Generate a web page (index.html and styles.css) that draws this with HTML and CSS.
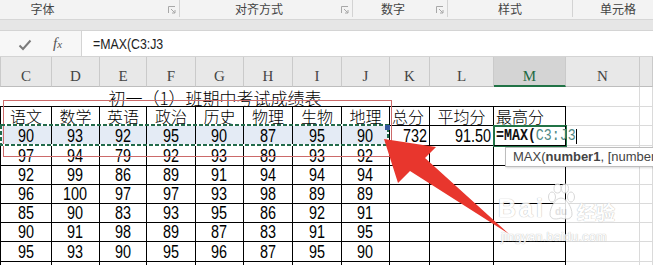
FILE: index.html
```html
<!DOCTYPE html>
<html>

<head>
    <title>成绩表</title>
    <link rel="stylesheet" href="styles.css">
</head>

<body>
    <div class="ribbon">
        <div class="group g-font"><span class="glabel">字体</span><span class="launch"><svg width="8" height="8" viewBox="0 0 8 8"><path d="M0.5 7V0.5H7" fill="none" stroke="#a8a8a8"/><path d="M3 3L7 7M7 4V7H4" fill="none" stroke="#a8a8a8"/></svg></span></div>
        <div class="group g-align"><span class="glabel">对齐方式</span><span class="launch"><svg width="8" height="8" viewBox="0 0 8 8"><path d="M0.5 7V0.5H7" fill="none" stroke="#a8a8a8"/><path d="M3 3L7 7M7 4V7H4" fill="none" stroke="#a8a8a8"/></svg></span></div>
        <div class="group g-num"><span class="glabel">数字</span><span class="launch"><svg width="8" height="8" viewBox="0 0 8 8"><path d="M0.5 7V0.5H7" fill="none" stroke="#a8a8a8"/><path d="M3 3L7 7M7 4V7H4" fill="none" stroke="#a8a8a8"/></svg></span></div>
        <div class="group g-style"><span class="glabel">样式</span></div>
        <div class="group g-cell"><span class="glabel">单元格</span></div>
    </div>
    <div class="band"></div>

    <div class="fbar">
        <div class="fbtns">
            <svg class="ok" width="14" height="12" viewBox="0 0 14 12"><path d="M1.5 6.5L5 10L12.5 1.5" fill="none" stroke="#7b7b7b" stroke-width="2"/></svg>
            <span class="fx">f<small>x</small></span>
        </div>
        <div class="finput"><span>=MAX(C3:J3</span></div>
    </div>

    <div class="sheet">
        <!-- column letters -->
        <div class="c h first-h">C</div>
        <div class="c h">D</div>
        <div class="c h">E</div>
        <div class="c h">F</div>
        <div class="c h">G</div>
        <div class="c h">H</div>
        <div class="c h">I</div>
        <div class="c h">J</div>
        <div class="c h">K</div>
        <div class="c h">L</div>
        <div class="c h h-sel">M</div>
        <div class="c h">N</div>
        <div class="c h"></div>

        <!-- row 1 -->
        <div class="c title tb">初一（1）班期中考试成绩表</div>
        <div class="c tb"></div>
        <div class="c tb"></div>
        <div class="c g"></div>
        <div class="c g"></div>

        <!-- row 2 -->
        <div class="c t first cn">语文</div>
        <div class="c t cn">数学</div>
        <div class="c t cn">英语</div>
        <div class="c t cn">政治</div>
        <div class="c t cn">历史</div>
        <div class="c t cn">物理</div>
        <div class="c t cn">生物</div>
        <div class="c t cn">地理</div>
        <div class="c t cn l">总分</div>
        <div class="c t cn">平均分</div>
        <div class="c t cn l">最高分</div>
        <div class="c g"></div>
        <div class="c g"></div>

        <!-- row 3 -->
        <div class="c t first num hl"><span>90</span></div>
        <div class="c t num hl"><span>93</span></div>
        <div class="c t num hl"><span>92</span></div>
        <div class="c t num hl"><span>95</span></div>
        <div class="c t num hl"><span>90</span></div>
        <div class="c t num hl"><span>87</span></div>
        <div class="c t num hl"><span>95</span></div>
        <div class="c t num hl"><span>90</span></div>
        <div class="c t num r"><span>732</span></div>
        <div class="c t num r"><span>91.50</span></div>
        <div class="c t l formula"><span><b>=MAX(</b><em>C3:J3</em></span><i class="caret"></i></div>
        <div class="c g"></div>
        <div class="c g"></div>

        <!-- row 4 -->
        <div class="c t first num"><span>97</span></div>
        <div class="c t num"><span>94</span></div>
        <div class="c t num"><span>79</span></div>
        <div class="c t num"><span>92</span></div>
        <div class="c t num"><span>93</span></div>
        <div class="c t num"><span>89</span></div>
        <div class="c t num"><span>93</span></div>
        <div class="c t num"><span>92</span></div>
        <div class="c t"></div>
        <div class="c t"></div>
        <div class="c t"></div>
        <div class="c g"></div>
        <div class="c g"></div>

        <!-- row 5 -->
        <div class="c t first num"><span>92</span></div>
        <div class="c t num"><span>99</span></div>
        <div class="c t num"><span>86</span></div>
        <div class="c t num"><span>89</span></div>
        <div class="c t num"><span>91</span></div>
        <div class="c t num"><span>94</span></div>
        <div class="c t num"><span>94</span></div>
        <div class="c t num"><span>94</span></div>
        <div class="c t"></div>
        <div class="c t"></div>
        <div class="c t"></div>
        <div class="c g"></div>
        <div class="c g"></div>

        <!-- row 6 -->
        <div class="c t first num"><span>96</span></div>
        <div class="c t num"><span>100</span></div>
        <div class="c t num"><span>97</span></div>
        <div class="c t num"><span>97</span></div>
        <div class="c t num"><span>93</span></div>
        <div class="c t num"><span>98</span></div>
        <div class="c t num"><span>89</span></div>
        <div class="c t num"><span>89</span></div>
        <div class="c t"></div>
        <div class="c t"></div>
        <div class="c t"></div>
        <div class="c g"></div>
        <div class="c g"></div>

        <!-- row 7 -->
        <div class="c t first num"><span>85</span></div>
        <div class="c t num"><span>90</span></div>
        <div class="c t num"><span>83</span></div>
        <div class="c t num"><span>93</span></div>
        <div class="c t num"><span>95</span></div>
        <div class="c t num"><span>86</span></div>
        <div class="c t num"><span>92</span></div>
        <div class="c t num"><span>91</span></div>
        <div class="c t"></div>
        <div class="c t"></div>
        <div class="c t"></div>
        <div class="c g"></div>
        <div class="c g"></div>

        <!-- row 8 -->
        <div class="c t first num"><span>90</span></div>
        <div class="c t num"><span>91</span></div>
        <div class="c t num"><span>98</span></div>
        <div class="c t num"><span>89</span></div>
        <div class="c t num"><span>87</span></div>
        <div class="c t num"><span>83</span></div>
        <div class="c t num"><span>91</span></div>
        <div class="c t num"><span>95</span></div>
        <div class="c t"></div>
        <div class="c t"></div>
        <div class="c t"></div>
        <div class="c g"></div>
        <div class="c g"></div>

        <!-- row 9 -->
        <div class="c t first num"><span>95</span></div>
        <div class="c t num"><span>93</span></div>
        <div class="c t num"><span>90</span></div>
        <div class="c t num"><span>95</span></div>
        <div class="c t num"><span>96</span></div>
        <div class="c t num"><span>87</span></div>
        <div class="c t num"><span>95</span></div>
        <div class="c t num"><span>90</span></div>
        <div class="c t"></div>
        <div class="c t"></div>
        <div class="c t"></div>
        <div class="c g"></div>
        <div class="c g"></div>

        <!-- row 10 -->
        <div class="c t first"></div>
        <div class="c t"></div>
        <div class="c t"></div>
        <div class="c t"></div>
        <div class="c t"></div>
        <div class="c t"></div>
        <div class="c t"></div>
        <div class="c t"></div>
        <div class="c t"></div>
        <div class="c t"></div>
        <div class="c t"></div>
        <div class="c g"></div>
        <div class="c g"></div>

        <!-- things drawn over the grid -->
        <div class="mark-box"></div>
        <svg class="ants" width="390" height="23" viewBox="0 0 390 23">
            <rect x="1" y="1" width="387" height="20" fill="none" stroke="#ffffff" stroke-width="2"/>
            <rect x="1" y="1" width="387" height="20" fill="none" stroke="#236b4b" stroke-width="2" stroke-dasharray="4 2"/>
        </svg>
        <div class="handle"></div>
        <div class="active"></div>

        <svg class="arrow" width="653" height="208" viewBox="0 57 653 208">
            <polygon points="384,139 436,147 425,158 509,234 410,171 398,183" fill="#e8362d"/>
        </svg>

        <div class="tip">MAX(<b>number1</b>, [number2], ...)</div>

        <div class="wm">
            <div class="wm-logo">
                <span class="wm-bai">Bai</span>
                <svg class="paw" width="30" height="38" viewBox="0 0 30 38">
                    <ellipse cx="6" cy="14" rx="3.5" ry="5" fill="#fff" stroke="#d2d2d2"/>
                    <ellipse cx="11.5" cy="5.5" rx="3.5" ry="4.5" fill="#fff" stroke="#d2d2d2"/>
                    <ellipse cx="19" cy="5.5" rx="3.5" ry="4.5" fill="#fff" stroke="#d2d2d2"/>
                    <ellipse cx="25" cy="14" rx="3.5" ry="5" fill="#fff" stroke="#d2d2d2"/>
                    <path d="M15 15C9 15 4 25 4 31C4 36 9 37 15 35C21 37 26 36 26 31C26 25 21 15 15 15Z" fill="#fff" stroke="#d2d2d2"/>
                    <text x="15" y="32" text-anchor="middle" font-family="Liberation Sans" font-weight="bold" font-size="10" fill="#dcdcdc">du</text>
                </svg>
                <span class="wm-cn">经验</span>
            </div>
            <div class="wm-url">jingyan.baidu.com</div>
        </div>
    </div>
</body>

</html>
```

FILE: styles.css
```css
body {
    margin: 0;
    width: 653px;
    height: 265px;
    overflow: hidden;
    background: #fff;
    font-family: "Noto Sans CJK SC", sans-serif;
}

/* ribbon group names */
.ribbon {
    display: flex;
    height: 20px;
    background: #f3f3f3;
    border-bottom: 1px solid #d6d6d6;
    box-sizing: border-box;
    overflow: hidden;
}

.group {
    display: flex;
    align-items: center;
    height: 17px;
    border-right: 1px solid #d3d3d3;
    box-sizing: border-box;
    flex: none;
}

.glabel {
    flex: 1;
    text-align: center;
    font-size: 12px;
    color: #444;
    line-height: 17px;
}

.launch {
    width: 14px;
    display: flex;
    align-items: center;
    justify-content: center;
    padding-top: 3px;
}

.g-font {
    margin-left: -80px;
    width: 260px;
}

.g-align {
    width: 173px;
}

.g-num {
    width: 95px;
}

.g-style {
    width: 125px;
}

.g-cell {
    width: 90px;
    border-right: none;
}

.band {
    height: 10px;
    background: #e6e6e6;
}

/* formula bar */
.fbar {
    display: flex;
    height: 27px;
    background: #f7f7f7;
    border-top: 1px solid #d4d4d4;
    border-bottom: 1px solid #d4d4d4;
    box-sizing: border-box;
}

.fbtns {
    width: 81px;
    display: flex;
    align-items: center;
}

.ok {
    margin-left: 18px;
    margin-top: 2px;
}

.fx {
    margin-left: 21px;
    font-family: "Liberation Serif", serif;
    font-style: italic;
    font-size: 15px;
    color: #555;
}

.fx small {
    font-size: 11px;
}

.finput {
    flex: 1;
    background: #fff;
    border-left: 1px solid #d4d4d4;
    padding-left: 11px;
    display: flex;
    align-items: center;
}

.finput span {
    display: inline-block;
    font-family: "Liberation Sans", sans-serif;
    font-size: 14px;
    color: #222;
    transform: scaleX(.88);
    transform-origin: left center;
}

/* the sheet */
.sheet {
    position: relative;
    height: 208px;
    overflow: hidden;
    display: grid;
    grid-template-columns: 52px 48px 47px 49px 48px 49px 49px 48px 40px 64px 72px 74px 13px;
    grid-template-rows: 30px 20px 19px 20px 20px 19px 19px 19px 19px 20px 20px;
}

.c {
    box-sizing: border-box;
    display: flex;
    align-items: center;
    justify-content: center;
    white-space: nowrap;
    font-size: 16px;
    color: #000;
    line-height: 1;
}

.h {
    background: #e8e8e8;
    border-right: 1px solid #cacaca;
    border-bottom: 1px solid #bdbdbd;
    padding-top: 10px;
    font-family: "Liberation Serif", serif;
    font-size: 15px;
    color: #444;
}

.first-h {
    border-left: 1px solid #cacaca;
}

.h-sel {
    background: #d4d4d4;
    color: #1f6a44;
    border-bottom: 2px solid #217346;
}

.title {
    grid-column: span 9;
    font-size: 17px;
    font-weight: 300;
    padding-top: 1px;
}

.tb {
    border-bottom: 1px solid #000;
}

.t {
    border-right: 1px solid #000;
    border-bottom: 1px solid #000;
}

.first {
    border-left: 1px solid #000;
}

.g {
    border-right: 1px solid #dadada;
    border-bottom: 1px solid #dadada;
}

.cn {
    font-size: 16px;
    font-weight: 300;
}

.num span {
    display: inline-block;
    font-family: "Liberation Sans", sans-serif;
    font-size: 18px;
    transform: scaleX(.8);
}

.r {
    justify-content: flex-end;
    padding-right: 2px;
}

.r span {
    transform-origin: right center;
}

.l {
    justify-content: flex-start;
    padding-left: 2px;
}

.hl {
    background: #e4ebf5;
}

.formula {
    overflow: visible;
    position: relative;
    z-index: 2;
}

.formula span {
    display: inline-block;
    font-family: "Liberation Mono", monospace;
    font-size: 16px;
    transform: scaleX(.83);
    transform-origin: left center;
}

.formula b {
    color: #111;
}

.formula em {
    font-style: normal;
    color: #4f8a86;
}

.caret {
    position: absolute;
    left: 82px;
    top: 3px;
    width: 1px;
    height: 15px;
    background: #000;
}

/* overlays */
.mark-box {
    position: absolute;
    left: 3px;
    top: 43px;
    width: 389px;
    height: 57px;
    border: 1px solid #cc6a6a;
    box-sizing: border-box;
}

.ants {
    position: absolute;
    left: 0;
    top: 67px;
}

.handle {
    position: absolute;
    left: 385px;
    top: 68px;
    width: 5px;
    height: 5px;
    background: #34589e;
}

.active {
    position: absolute;
    left: 493px;
    top: 68px;
    width: 74px;
    height: 22px;
    border: 2px solid #217346;
    box-sizing: border-box;
}

.arrow {
    position: absolute;
    left: 0;
    top: 0;
}

.tip {
    position: absolute;
    left: 505px;
    top: 90px;
    width: 170px;
    height: 20px;
    box-sizing: border-box;
    padding-left: 7px;
    background: #fff;
    border: 1px solid #bdbdbd;
    box-shadow: 1px 1px 2px rgba(0, 0, 0, .15);
    font-family: "Liberation Sans", sans-serif;
    font-size: 13px;
    line-height: 18px;
    color: #444;
    white-space: nowrap;
    z-index: 3;
}

.wm {
    position: absolute;
    left: 498px;
    top: 126px;
    color: #fff;
    opacity: .85;
}

.wm-logo {
    display: flex;
    align-items: flex-end;
}

.wm-bai {
    font-family: "Liberation Sans", sans-serif;
    font-weight: bold;
    font-size: 25px;
    letter-spacing: 3px;
    line-height: 1;
    text-shadow: 0 0 1px #bbb, 0 0 1px #bbb;
}

.wm-cn {
    font-size: 19px;
    font-weight: bold;
    line-height: 1;
    margin-left: 1px;
    text-shadow: 0 0 1px #bbb, 0 0 1px #bbb;
}

.wm-url {
    margin-top: 9px;
    margin-left: 3px;
    font-family: "Liberation Sans", sans-serif;
    font-size: 12.5px;
    letter-spacing: .3px;
    text-shadow: 0 0 1px #bbb, 0 0 1px #bbb;
}
```
